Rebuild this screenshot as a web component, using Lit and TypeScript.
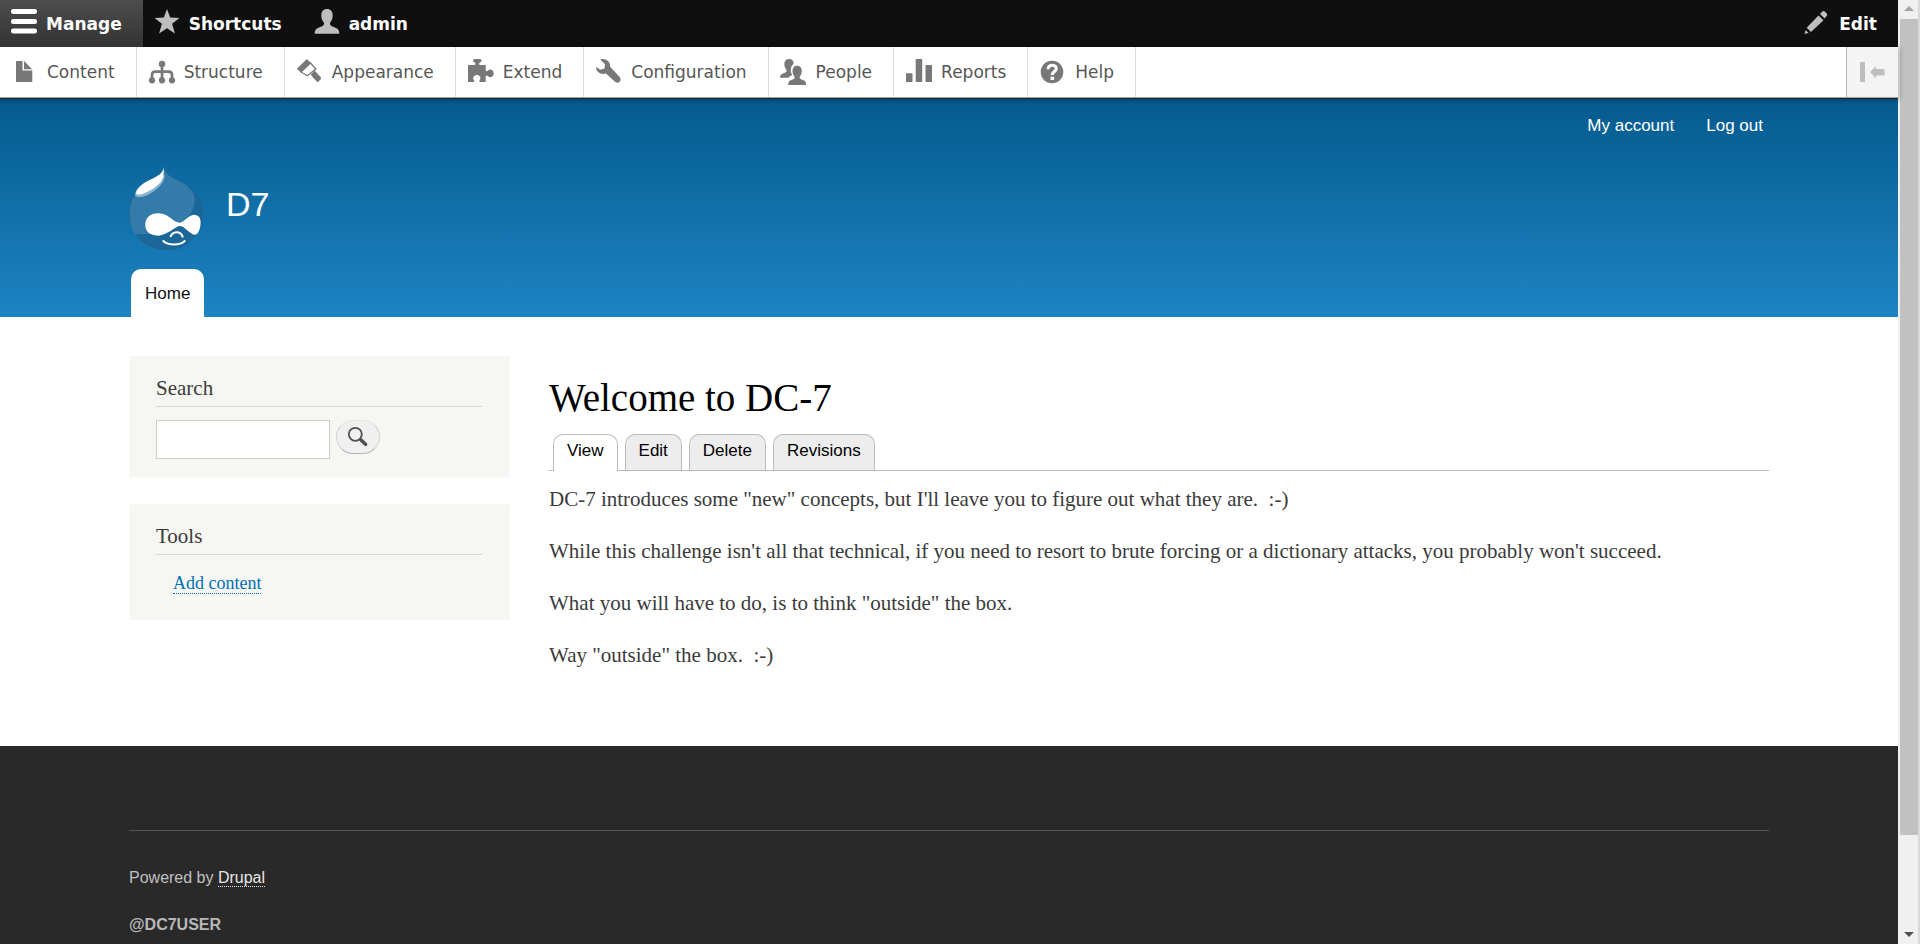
import { LitElement, html, svg, css } from "lit";
import { customElement } from "lit/decorators.js";

const barIcons = {
  menu: svg`<rect x="1" y="9" width="26" height="5" rx="2.3"/><rect x="1" y="19" width="26" height="5" rx="2.3"/><rect x="1" y="28.5" width="26" height="5" rx="2.3"/>`,
  star: svg`<path d="M14 9l3.2 8.6 9.2.3-7.3 5.9 2.8 9.7-7.9-5.2-7.9 5.2 2.8-9.7-7.3-5.9 9.2-.3z"/>`,
  user: svg`<path d="M14 9c3.600 0 5.700 2.500 5.700 6.500 0 3-1 5-2.500 7-.5 1-.2 2.500.8 3.200 1.500 1.200 4 1.500 6 2.800 1.500 1 2.300 2.500 2.300 5.200H1.700c0-2.700.8-4.200 2.300-5.200 2-1.300 4.500-1.600 6-2.800 1-.7 1.300-2.200.8-3.200-1.500-2-2.500-4-2.500-7C8.300 11.500 10.400 9 14 9z"/>`,
  pencil: svg`<path d="M3.700 27.700L15.500 15.500l5 4.700L8 32z"/><path d="M17 14l2.200-2.300c.8-.8 2-.8 2.800 0l1.500 1.500c.9.9.9 2 .1 2.900L21.700 18.400z"/><path d="M2.600 30.200l3 2.600-4.100 1.300z"/>`,
};

const trayIcons = {
  file: svg`<path d="M6 14h6.500v9.500h9.800V35H6z"/><path d="M14 14l8.200 8.200H14z"/>`,
  chart: svg`<circle cx="15" cy="17" r="3.200"/><circle cx="5" cy="33.300" r="3.100"/><circle cx="15" cy="33.300" r="3.100"/><circle cx="25" cy="33.300" r="3.100"/><path d="M15 17v16M5 33v-5c0-2.200 1-3.300 3.200-3.300h13.600c2.200 0 3.200 1.100 3.200 3.300v5" fill="none" stroke="currentColor" stroke-width="2.700"/>`,
  brush: svg`<path d="M2 21.800L11.800 12l4 4-9.800 9.800z"/><path d="M6 25l9.500-9 5.300 6-8.500 6.800z" fill="#fff" stroke="currentColor" stroke-width="1.300"/><path d="M15.600 27.700l4-4.200 6.800 7.400-3.700 4.400-2-2z"/><path d="M19 28l5.200 5.600" stroke="currentColor" stroke-width="4.200"/>`,
  puzzle: svg`<path d="M2 18h6c1.500 0 1.800-1 1.200-2L7.300 14.500C6.800 13 7.500 12 9 12h4.700c1.600 0 2.200 1 1.600 2.500L13.300 16c-.5 1-.2 2 1.200 2h5.200v5.200c.6 1.300 1.500 1.300 2.300.2 2-2 5.700-.9 5.700 2.900s-3.700 5-5.700 3c-.8-1.100-1.700-1-2.300.2V35h-6c-.6-.8-.4-1.400.2-2 1.500-2.500-.2-4.900-3-4.900s-4.600 2.400-3.200 4.900c.6.600.8 1.200.2 2H2z"/>`,
  wrench: svg`<path d="M6.300 12.500C11 11 16.400 14 16.200 19.700L26 30.500C28 33.500 24.500 37.500 21.300 35L12 26.500C7 28.200 2 25 2 19.700L6.300 22.700L10.500 21.500L11 17.300Z"/>`,
  people: svg`<path d="M10 12c3.200 0 4.700 2 4.700 4.800-2 1.500-3 3.700-2.900 7 .2 1.800.7 3.100 1.400 4.100-1.200.9-2.700 1.300-3.800 2.900H1c0-2.800 1.300-3.800 3-4.400 1.800-.6 3.300-.9 3.500-2.200.1-1-.3-1.600-1-2.600-.8-1.300-1.200-2.800-1.200-4.600C5.300 14 7 12 10 12z"/><path d="M18 18.800c3.200 0 4.800 2 4.800 5.100 0 2.200-.8 3.900-1.900 5.500-.5.9-.4 1.900.3 2.400 1.100.8 2.900 1.100 4.300 2 1.100.8 1.600 2 1.600 4.200H9.200c0-2.200.5-3.400 1.600-4.200 1.400-.9 3.200-1.200 4.300-2 .7-.5.8-1.500.3-2.400-1.100-1.600-1.900-3.300-1.900-5.500 0-3.100 1.500-5.100 4.500-5.100z" stroke="#fff" stroke-width="1" paint-order="stroke"/>`,
  bars: svg`<rect x="2" y="26.300" width="6.500" height="8.700" rx=".6"/><rect x="11.700" y="12" width="6.500" height="23" rx=".6"/><rect x="21.500" y="18" width="6.500" height="17" rx=".6"/>`,
  help: svg`<circle cx="14" cy="25" r="11.300"/><path d="M10 22.300c0-5.500 8.300-5.200 8.300-.8 0 3-4 3-4 6.500" fill="none" stroke="#fff" stroke-width="3"/><rect x="12.500" y="29.700" width="3.600" height="3.200" fill="#fff"/>`,
};

const trayItems = [
  { label: "Content", icon: trayIcons.file },
  { label: "Structure", icon: trayIcons.chart },
  { label: "Appearance", icon: trayIcons.brush },
  { label: "Extend", icon: trayIcons.puzzle },
  { label: "Configuration", icon: trayIcons.wrench },
  { label: "People", icon: trayIcons.people },
  { label: "Reports", icon: trayIcons.bars },
  { label: "Help", icon: trayIcons.help },
];

@customElement("admin-toolbar")
class AdminToolbar extends LitElement {
  static styles = css`
    :host {
      display: block;
      position: relative;
      font-family: Verdana, "DejaVu Sans", sans-serif;
      font-size: 17px;
    }
    .bar {
      display: flex;
      height: 47px;
      background: #0f0f0f;
    }
    .bar-item {
      display: flex;
      align-items: center;
      gap: 8px;
      padding: 0 21px 0 10px;
      border: 0;
      background: none;
      color: #fff;
      font: inherit;
      font-weight: bold;
    }
    .bar-item svg {
      width: 28px;
      height: 47px;
      fill: #bebebe;
    }
    .bar-item.active {
      background: linear-gradient(#4d4d4d, #333);
    }
    .bar-item.active svg {
      fill: #fff;
    }
    .bar-item.edit {
      margin-left: auto;
    }
    .tray {
      display: flex;
      height: 50px;
      background: #fff;
      border-bottom: 1px solid #a5a5a5;
      box-shadow: 0 1px 0 #222, 0 1px 5px 1px rgba(0, 0, 0, 0.33);
    }
    .tray-item {
      display: flex;
      align-items: center;
      gap: 9px;
      padding: 0 21px 0 10px;
      border-right: 1px solid #ddd;
      color: #565656;
      text-decoration: none;
    }
    .tray-item svg {
      width: 28px;
      height: 50px;
      overflow: visible;
      color: #787878;
      fill: currentColor;
    }
    .toggle {
      margin-left: auto;
      width: 52px;
      padding: 0;
      border: 0;
      border-left: 1px solid #bbb;
      background: #f4f4f4;
    }
    .toggle svg {
      display: block;
      width: 51px;
      height: 50px;
      fill: #bebebe;
    }
  `;

  barItem(label: string, icon: unknown, kind = "") {
    return html`<button class="bar-item ${kind}" type="button">
      <svg viewBox="0 0 28 47" aria-hidden="true">${icon}</svg>${label}
    </button>`;
  }

  render() {
    return html`
      <div class="bar">
        ${this.barItem("Manage", barIcons.menu, "active")}
        ${this.barItem("Shortcuts", barIcons.star)}
        ${this.barItem("admin", barIcons.user)}
        ${this.barItem("Edit", barIcons.pencil, "edit")}
      </div>
      <nav class="tray" aria-label="Administration">
        ${trayItems.map(
          (item) => html`<a class="tray-item" href="#">
            <svg viewBox="0 0 28 50" aria-hidden="true">${item.icon}</svg>${item.label}
          </a>`
        )}
        <button class="toggle" type="button" aria-label="Vertical orientation">
          <svg viewBox="0 0 51 50" aria-hidden="true">
            <rect x="13" y="15" width="5" height="20" rx=".6" />
            <path d="M23 25l6-6v3h8.500v6.500H29v3z" />
          </svg>
        </button>
      </nav>
    `;
  }
}

@customElement("site-header")
class SiteHeader extends LitElement {
  static styles = css`
    :host {
      display: block;
      padding: 0 129px;
      background: linear-gradient(#055a8e, #1d84c3);
      font-family: Arial, "Liberation Sans", sans-serif;
      font-size: 17px;
      line-height: 20px;
    }
    .inner {
      max-width: 1640px;
      margin: 0 auto;
      padding-top: 18px;
    }
    .account {
      display: flex;
      justify-content: flex-end;
      gap: 32px;
      padding-right: 6px;
    }
    .account a,
    .name {
      color: #fff;
      text-decoration: none;
    }
    .branding {
      display: flex;
      align-items: flex-start;
      gap: 23px;
      padding: 30px 0 19px;
    }
    .branding svg {
      display: block;
      width: 74px;
      height: 84px;
    }
    .name {
      padding-top: 19px;
      font-size: 34px;
      line-height: 38px;
    }
    .menu {
      display: flex;
      padding-left: 2px;
    }
    .menu a {
      padding: 15px 14px 13px;
      border-radius: 10px 10px 0 0;
      background: #fff;
      color: #111;
      text-decoration: none;
    }
  `;

  render() {
    return html`<header class="inner">
      <nav class="account" aria-label="User account">
        <a href="#">My account</a>
        <a href="#">Log out</a>
      </nav>
      <div class="branding">
        <a href="#" aria-label="Home page">
          <svg viewBox="27 18 222 252">
            <path d="M131 18C134 40 152 51 175 62C215 80 248 115 248 162C248 222 200 269 140 269C75 269 28 220 28 160C28 118 50 95 80 72C105 56 128 50 131 18Z" fill="#1b6799" stroke="#285f88" stroke-width="2"/>
            <path d="M131 20C134 40 152 51 175 62C200 73 219 90 223 110C228 145 208 175 180 192C160 206 145 222 110 222L44 222C34 205 29 185 29 160C29 118 50 95 80 72C105 56 128 50 131 20Z" fill="#337caa"/>
            <path d="M134 46C136 64 112 92 84 104C66 113 47 114 45 105C46 92 56 80 68 72C100 52 124 52 134 46Z" fill="#8db6d2"/>
            <path d="M131 20C130 47 98 52 72 70C56 82 46 95 49 102C54 109 78 99 96 88C116 76 128 62 131 46Z" fill="#fff"/>
            <path d="M76 190C78 165 105 153 132 163C152 171 165 188 178 188C195 185 205 165 222 164C245 164 245 190 238 210C230 230 220 226 208 216C195 206 188 197 178 198C165 200 145 224 115 227C85 227 74 210 76 190Z" fill="#fff"/>
            <path d="M152 229C158 215 180 210 188 230M130 243C145 257 180 257 194 243" fill="none" stroke="#fff" stroke-width="6" stroke-linecap="round"/>
          </svg>
        </a>
        <a class="name" href="#">D7</a>
      </div>
      <nav class="menu" aria-label="Main navigation"><a href="#">Home</a></nav>
    </header>`;
  }
}

@customElement("side-blocks")
class SideBlocks extends LitElement {
  static styles = css`
    :host {
      display: flex;
      flex-direction: column;
      gap: 26px;
      color: #3b3b3b;
      font-family: Georgia, "Liberation Serif", serif;
    }
    .block {
      padding: 18px 27px 18px 26px;
      border: 1px solid #f9f9f9;
      background: #f6f6f2;
    }
    h2 {
      margin: 0;
      padding-bottom: 5px;
      border-bottom: 1px solid #d6d6d6;
      font-size: 21px;
      line-height: 26px;
      font-weight: normal;
    }
    form {
      display: flex;
      align-items: flex-start;
      gap: 6px;
      margin-top: 13px;
    }
    input {
      box-sizing: border-box;
      width: 174px;
      height: 39px;
      padding: 4px;
      border: 1px solid #ccc;
      background: #fff;
      font: inherit;
    }
    button {
      box-sizing: border-box;
      width: 44px;
      height: 34px;
      padding: 0;
      border: 1px solid;
      border-color: #e4e4e4 #d2d2d2 #b4b4b4;
      border-radius: 17px;
      background: #f0f0f0;
    }
    button svg {
      display: block;
      width: 42px;
      height: 32px;
      fill: none;
      stroke: #505050;
    }
    ul {
      margin: 17px 0 7px 17px;
      padding: 0;
      list-style: none;
      font-size: 18px;
      line-height: 22px;
    }
    ul a {
      border-bottom: 1px dotted #0071b3;
      color: #0071b3;
      text-decoration: none;
    }
  `;

  render() {
    return html`
      <section class="block">
        <h2><label for="keys">Search</label></h2>
        <form>
          <input id="keys" type="search" />
          <button type="button" aria-label="Search">
            <svg viewBox="0 0 42 32" aria-hidden="true">
              <circle cx="18.300" cy="13.300" r="6.500" stroke-width="1.800" />
              <path d="M22.800 18l1.500 1.500" stroke-width="2" />
              <path d="M24 19l4.600 4.300" stroke-width="3.600" stroke-linecap="round" />
            </svg>
          </button>
        </form>
      </section>
      <section class="block">
        <h2>Tools</h2>
        <ul>
          <li><a href="#">Add content</a></li>
        </ul>
      </section>
    `;
  }
}

@customElement("node-page")
class NodePage extends LitElement {
  static styles = css`
    :host {
      display: block;
      color: #3b3b3b;
      font-family: Georgia, "Liberation Serif", serif;
      font-size: 21px;
      line-height: 31px;
    }
    h1 {
      margin: 20px 0 14px;
      color: #000;
      font-size: 39px;
      line-height: 44px;
      font-weight: normal;
    }
    .tabs {
      display: flex;
      gap: 7px;
      margin-bottom: 13px;
      padding-left: 4px;
      border-bottom: 1px solid #bbb;
      font-family: Arial, "Liberation Sans", sans-serif;
      font-size: 17px;
      line-height: 20px;
    }
    .tabs a {
      padding: 6px 13px 9px;
      border: 1px solid #bbb;
      border-bottom: 0;
      border-radius: 10px 10px 0 0;
      background: #ededed;
      color: #000;
      text-decoration: none;
    }
    .tabs a.active {
      margin-bottom: -1px;
      padding-bottom: 10px;
      background: #fff;
    }
    p {
      margin: 0 0 21px;
    }
  `;

  render() {
    return html`
      <h1>Welcome to DC-7</h1>
      <nav class="tabs" aria-label="Tabs">
        <a class="active" href="#">View</a>
        <a href="#">Edit</a>
        <a href="#">Delete</a>
        <a href="#">Revisions</a>
      </nav>
      <p>DC-7 introduces some "new" concepts, but I'll leave you to figure out what they are.&nbsp; :-)</p>
      <p>While this challenge isn't all that technical, if you need to resort to brute forcing or a dictionary attacks, you probably won't succeed.</p>
      <p>What you will have to do, is to think "outside" the box.</p>
      <p>Way "outside" the box.&nbsp; :-)</p>
    `;
  }
}

@customElement("app-root")
class AppRoot extends LitElement {
  static styles = css`
    :host {
      display: flex;
      min-height: 100vh;
      background: #fff;
    }
    .page {
      display: flex;
      flex-direction: column;
      flex: 1;
      min-width: 0;
    }
    admin-toolbar {
      z-index: 1;
    }
    .content {
      padding: 39px 129px 54px;
    }
    .columns {
      display: grid;
      grid-template-columns: 381px minmax(0, 1fr);
      align-items: start;
      gap: 39px;
      max-width: 1640px;
      margin: 0 auto;
    }
    .footer {
      flex: 1;
      padding: 84px 129px 10px;
      background: #292929;
      color: #c0c0c0;
      font-family: Arial, "Liberation Sans", sans-serif;
      font-size: 16px;
      line-height: 20px;
    }
    .footer-inner {
      max-width: 1640px;
      margin: 0 auto;
      padding-top: 37px;
      border-top: 1px solid #555;
    }
    .footer p {
      margin: 0 0 27px;
    }
    .footer p:last-child {
      margin: 0;
      color: #b8b8b8;
      font-weight: bold;
    }
    .footer a {
      border-bottom: 1px dotted #e6e6e6;
      color: #e6e6e6;
      text-decoration: none;
    }
    .scrollbar {
      box-sizing: border-box;
      display: flex;
      flex-direction: column;
      width: 22px;
      padding-left: 2px;
      border-right: 2px solid #d9d9d9;
      background: #f0f0f0;
    }
    .arrow {
      display: block;
      width: 18px;
      height: 19px;
    }
    .thumb {
      flex: 9;
      background: #c1c1c1;
    }
    .rest {
      flex: 1;
    }
  `;

  render() {
    return html`
      <div class="page">
        <admin-toolbar></admin-toolbar>
        <site-header></site-header>
        <main class="content">
          <div class="columns">
            <side-blocks></side-blocks>
            <node-page></node-page>
          </div>
        </main>
        <footer class="footer">
          <div class="footer-inner">
            <p>Powered by <a href="#">Drupal</a></p>
            <p>@DC7USER</p>
          </div>
        </footer>
      </div>
      <div class="scrollbar" aria-hidden="true">
        <svg class="arrow" viewBox="0 0 18 19"><path d="M4 11l5-5 5 5z" fill="#a3a3a3" /></svg>
        <div class="thumb"></div>
        <div class="rest"></div>
        <svg class="arrow" viewBox="0 0 18 19"><path d="M4 6h10l-5 5z" fill="#505050" /></svg>
      </div>
    `;
  }
}
